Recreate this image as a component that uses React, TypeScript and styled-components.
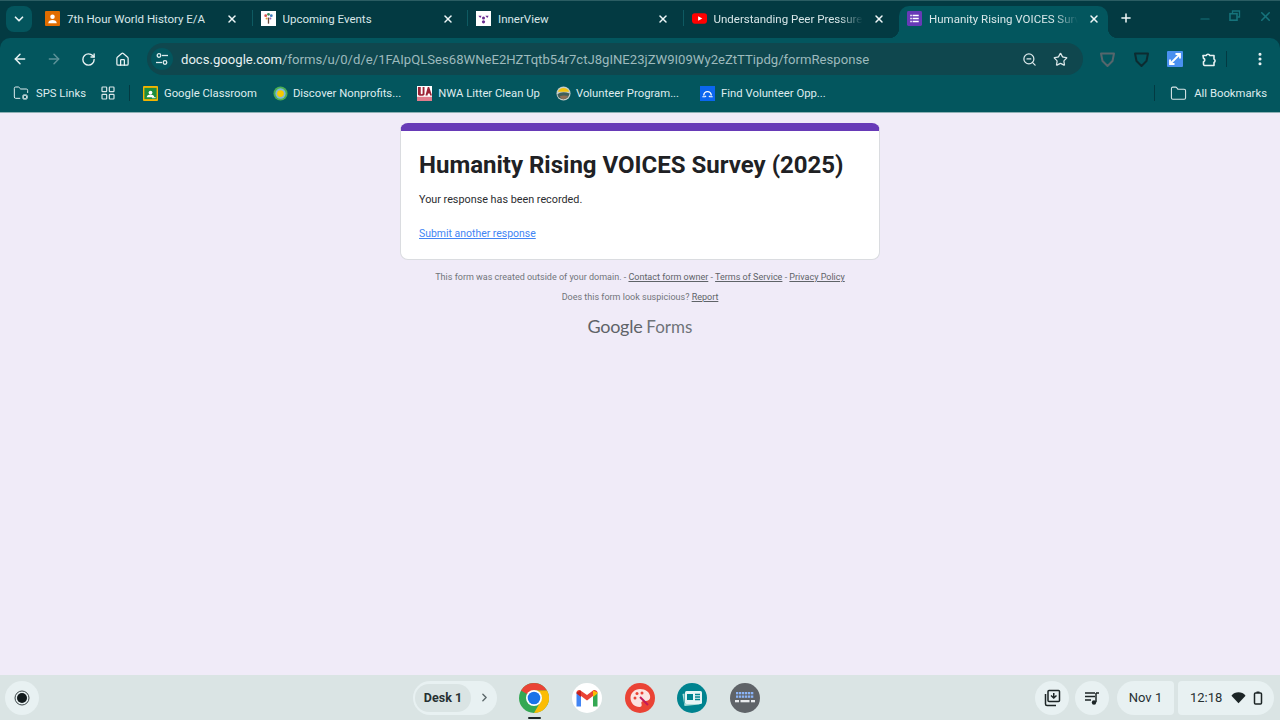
import React from "react";
import styled, { createGlobalStyle } from "styled-components";
import {
  ArrowLeft,
  ArrowRight,
  RotateCw,
  House,
  ChevronDown,
  ChevronRight,
  X,
  Plus,
  Minus,
  ZoomOut,
  Star,
  EllipsisVertical,
  Folder,
  FolderCog,
  LayoutGrid,
} from "lucide-react";

const Global = createGlobalStyle`
  html, body { margin: 0; padding: 0; width: 1280px; height: 720px; overflow: hidden; background: #f0ebf8; }
  #root { width: 1280px; height: 720px; }
  * { box-sizing: border-box; }
`;

const Screen = styled.div`
  width: 1280px;
  height: 720px;
  display: flex;
  flex-direction: column;
  font-family: Roboto, "Liberation Sans", sans-serif;
`;
const Chrome = styled.header`
  background: #033a42;
  border-top: 1px solid #2b5d63;
  flex: none;
`;
const TabStrip = styled.div`
  height: 37px;
  display: flex;
  align-items: flex-start;
  padding-left: 6px;
`;
const TabSearch = styled.button`
  width: 26px;
  height: 26px;
  margin: 5px 5px 0 0;
  flex: none;
  border: 0;
  padding: 0;
  border-radius: 8px;
  background: #04555d;
  color: #e6f2f3;
  display: flex;
  align-items: center;
  justify-content: center;
`;
const Tab = styled.div<{ $active?: boolean }>`
  position: relative;
  width: ${(p) => (p.$active ? "209px" : "215.5px")};
  height: 32px;
  margin-top: 5px;
  flex: none;
  display: flex;
  align-items: center;
  padding: 0 0 7px 8px;
  color: #d8e6e8;
  font-size: 11.5px;
  border-radius: 10px 10px 0 0;
  background: ${(p) => (p.$active ? "#03565e" : "transparent")};
  ${(p) =>
    p.$active &&
    `
    &::before, &::after { content: ""; position: absolute; bottom: 0; width: 10px; height: 10px; }
    &::before { left: -10px; background: radial-gradient(circle at 0 0, transparent 10px, #03565e 10.5px); }
    &::after { right: -10px; background: radial-gradient(circle at 100% 0, transparent 10px, #03565e 10.5px); }
  `}
`;
const TabTitle = styled.span<{ $fade?: boolean }>`
  margin-left: 7px;
  width: 150px;
  flex: none;
  white-space: nowrap;
  overflow: hidden;
  ${(p) =>
    p.$fade &&
    `mask-image: linear-gradient(to right, #000 125px, transparent 149px);`}
`;
const TabClose = styled.span`
  margin-left: 9px;
  display: flex;
  color: #eef6f7;
`;
const TabDivider = styled.i`
  position: absolute;
  right: 0;
  top: 4px;
  width: 1px;
  height: 16px;
  background: #0e5a62;
`;
const NewTab = styled.span`
  margin: 10px 0 0 11px;
  display: flex;
  color: #f2f8f8;
`;
const WindowControls = styled.div`
  margin-left: auto;
  display: flex;
  gap: 14px;
  padding: 7px 7px 0 0;
  color: #16737b;
`;
const WindowButton = styled.span<{ $down?: number }>`
  width: 16px;
  height: 16px;
  display: flex;
  align-items: center;
  justify-content: center;
  margin-top: ${(p) => p.$down ?? 0}px;
`;
const Toolbar = styled.div`
  height: 38px;
  background: #03565e;
  border-radius: 10px 10px 0 0;
  display: flex;
  align-items: center;
  padding: 4px 0 0 3px;
`;
const NavButton = styled.span<{ $dim?: boolean }>`
  width: 34px;
  height: 32px;
  flex: none;
  display: flex;
  align-items: center;
  justify-content: center;
  color: ${(p) => (p.$dim ? "#5d9298" : "#eaf3f4")};
`;
const Omnibox = styled.div`
  width: 936px;
  height: 32px;
  margin-left: 8px;
  flex: none;
  border-radius: 16px;
  background: #0f474e;
  display: flex;
  align-items: center;
  padding: 0 7px 0 4px;
`;
const TuneChip = styled.span`
  width: 22px;
  height: 22px;
  border-radius: 50%;
  background: #03565e;
  color: #dfecee;
  display: flex;
  align-items: center;
  justify-content: center;
  flex: none;
`;
const Url = styled.div`
  margin-left: 8px;
  font-size: 13.12px;
  color: #9dbabd;
  white-space: nowrap;
  flex: 1;
`;
const UrlHost = styled.span`
  color: #e8f1f2;
`;
const OmniIcon = styled.span`
  width: 31px;
  display: flex;
  justify-content: center;
  color: #dce8ea;
`;
const ExtensionRow = styled.div`
  display: flex;
  align-items: center;
  margin-left: 7px;
`;
const ExtensionSlot = styled.span`
  width: 34px;
  display: flex;
  justify-content: center;
  color: #e8f1f2;
`;
const VerticalRule = styled.i<{ $h?: number }>`
  width: 1px;
  height: ${(p) => p.$h ?? 16}px;
  background: #033a42;
  flex: none;
`;
const MenuDots = styled.span`
  margin-left: 17px;
  display: flex;
  color: #eef5f6;
`;
const BookmarkBar = styled.nav`
  height: 37px;
  background: #03565e;
  border-bottom: 1px solid #8fb1b5;
  display: flex;
  align-items: center;
  padding: 0 13px 2px;
  font-size: 11.3px;
  color: #dfecee;
`;
const Bookmark = styled.span<{ $left: number; $gap?: number }>`
  display: flex;
  align-items: center;
  gap: ${(p) => p.$gap ?? 6}px;
  margin-left: ${(p) => p.$left}px;
  white-space: nowrap;
`;
const Spacer = styled.span`
  flex: 1;
`;
const BarIcon = styled.span<{ $left?: number; $right?: number }>`
  display: flex;
  color: #d9e6e8;
  margin-left: ${(p) => p.$left ?? 0}px;
  margin-right: ${(p) => p.$right ?? 0}px;
`;
const Page = styled.main`
  flex: 1;
  min-height: 0;
  background: #f0ebf8;
  display: flex;
  flex-direction: column;
  align-items: center;
  padding-top: 10px;
`;
const Card = styled.section`
  width: 480px;
  height: 137px;
  background: #fff;
  border: 1px solid #dadce0;
  border-top: 8px solid #673ab7;
  border-radius: 8px;
  padding: 20px 18px 0;
`;
const Title = styled.h1`
  margin: 0;
  font-size: 24px;
  line-height: 29px;
  font-weight: 700;
  color: #202124;
  white-space: nowrap;
`;
const Confirmation = styled.p`
  margin: 13px 0 0;
  font-size: 10.8px;
  line-height: 14px;
  color: #2b2c30;
`;
const AnotherLink = styled.a`
  display: block;
  margin-top: 20px;
  font-size: 10.46px;
  line-height: 14px;
  color: #4285f4;
  text-decoration: underline;
`;
const Legal = styled.p<{ $top: number }>`
  margin: ${(p) => p.$top}px 0 0;
  font-size: 9px;
  line-height: 12px;
  color: #70757a;
  white-space: nowrap;
`;
const LegalLink = styled.a`
  color: #5f6368;
  text-decoration: underline;
`;
const Wordmark = styled.div`
  margin-top: 11px;
  display: flex;
  align-items: baseline;
  gap: 4px;
  color: #6f7378;
  font-family: Lato, "Open Sans", sans-serif;
  line-height: 24px;
`;
const WordGoogle = styled.span`
  font-size: 18px;
  letter-spacing: -0.3px;
  color: #5f6368;
`;
const WordForms = styled.span`
  font-size: 17px;
`;
const Shelf = styled.footer`
  height: 45px;
  flex: none;
  background: #dae4e4;
  display: grid;
  grid-template-columns: 1fr auto 1fr;
  align-items: center;
  padding: 0 6px 0 5px;
`;
const ShelfLeft = styled.div`
  display: flex;
  align-items: center;
  justify-content: space-between;
  padding-right: 22px;
`;
const ShelfRight = styled.div`
  display: flex;
  align-items: center;
  justify-content: flex-end;
  gap: 4px;
`;
const RoundButton = styled.span<{ $right?: number }>`
  width: 34px;
  height: 34px;
  border-radius: 50%;
  background: #e8f1f2;
  display: flex;
  align-items: center;
  justify-content: center;
  color: #1c2526;
  margin-right: ${(p) => p.$right ?? 0}px;
`;
const DeskPill = styled.div`
  width: 84px;
  height: 34px;
  border-radius: 17px;
  background: #e8f1f2;
  display: flex;
  align-items: center;
  padding-left: 2px;
  color: #5c686a;
`;
const DeskName = styled.span`
  width: 56px;
  height: 28px;
  border-radius: 14px;
  background: #dae4e4;
  font-size: 12.5px;
  font-weight: 700;
  color: #273032;
  display: flex;
  align-items: center;
  justify-content: center;
  margin-right: 7px;
`;
const Apps = styled.div`
  display: flex;
  gap: 22.75px;
`;
const AppSlot = styled.span`
  position: relative;
  width: 30px;
  height: 30px;
  display: flex;
`;
const RunningDot = styled.i`
  position: absolute;
  left: 9px;
  bottom: -6px;
  width: 13px;
  height: 2px;
  border-radius: 1px;
  background: #1c2526;
`;
const StatusPill = styled.div<{ $w: number; $side: "left" | "right" }>`
  width: ${(p) => p.$w}px;
  height: 34px;
  background: #e8f1f2;
  border-radius: ${(p) => (p.$side === "left" ? "17px 4px 4px 17px" : "4px 17px 17px 4px")};
  display: flex;
  align-items: center;
  justify-content: ${(p) => (p.$side === "left" ? "center" : "flex-start")};
  padding-left: ${(p) => (p.$side === "left" ? 0 : 12)}px;
  font-size: 13px;
  color: #273032;
`;
const StatusIcon = styled.span<{ $left: number }>`
  display: flex;
  margin-left: ${(p) => p.$left}px;
`;

const Svg = ({ s = 16, v = 16, children }: { s?: number; v?: number; children: React.ReactNode }) => (
  <svg width={s} height={s} viewBox={`0 0 ${v} ${v}`} style={{ flex: "none", display: "block" }}>
    {children}
  </svg>
);

const FavHistory = () => (
  <Svg s={15}>
    <rect width="16" height="16" rx="1" fill="#e06c00" />
    <circle cx="8" cy="6" r="2.4" fill="#fff" />
    <path d="M3.5 13c0-2.400 2-3.500 4.500-3.500s4.500 1.100 4.500 3.500z" fill="#fff" />
  </Svg>
);
const FavEvents = () => (
  <Svg s={15}>
    <rect width="16" height="16" fill="#fff" />
    <rect x="7.300" y="7" width="1.400" height="6.500" fill="#6a4a3a" />
    <circle cx="5" cy="5" r="1.500" fill="#d9534f" />
    <circle cx="8" cy="3.500" r="1.500" fill="#3a8f5c" />
    <circle cx="11" cy="5" r="1.500" fill="#3f7fc1" />
    <circle cx="6" cy="8" r="1.100" fill="#e0a030" />
    <circle cx="10" cy="8" r="1.100" fill="#8f5fb5" />
  </Svg>
);
const FavInner = () => (
  <Svg s={15}>
    <rect width="16" height="16" fill="#fff" />
    <path d="M2.500 5h3.500L4.500 7.500zM10 5h3.500L12 7.500z" fill="#6a2c91" />
    <circle cx="8" cy="7.500" r="1.600" fill="#6a2c91" />
    <circle cx="8" cy="11.500" r="1.700" fill="#6a2c91" />
  </Svg>
);
const FavYouTube = () => (
  <Svg s={15}>
    <rect y="2.500" width="16" height="11" rx="3" fill="#f00" />
    <path d="M6.500 5.500v5L11 8z" fill="#fff" />
  </Svg>
);
const FavForms = () => (
  <Svg s={15}>
    <rect width="16" height="16" rx="1.500" fill="#673ab7" />
    <g fill="#fff">
      <rect x="3.500" y="4" width="1.600" height="1.600" />
      <rect x="6" y="4" width="6.500" height="1.600" />
      <rect x="3.500" y="7.200" width="1.600" height="1.600" />
      <rect x="6" y="7.200" width="6.500" height="1.600" />
      <rect x="3.500" y="10.400" width="1.600" height="1.600" />
      <rect x="6" y="10.400" width="6.500" height="1.600" />
    </g>
  </Svg>
);
const FavClassroom = () => (
  <Svg s={15}>
    <rect width="16" height="16" rx="1" fill="#f4b400" />
    <rect x="1.500" y="2" width="13" height="12" fill="#1e8e3e" />
    <circle cx="8" cy="7" r="2" fill="#fff" />
    <path d="M4 12c0-2 1.800-3 4-3s4 1 4 3z" fill="#fff" />
    <rect x="9.500" y="12" width="4" height="1" fill="#fff" />
  </Svg>
);
const FavNonprofit = () => (
  <Svg s={15}>
    <circle cx="8" cy="8" r="7.500" fill="#4caf50" />
    <circle cx="8" cy="8" r="5.500" fill="#7fb8d8" />
    <circle cx="8" cy="8" r="3.600" fill="#f5c800" />
  </Svg>
);
const FavUA = () => (
  <Svg s={15}>
    <rect width="16" height="16" fill="#fff" />
    <rect y="11.500" width="16" height="4.500" fill="#c8102e" opacity=".55" />
    <path d="M1 1h3v7c0 1 2 1 2 0V1h2v8c0 2-7 2-7 0zM9 10l2.500-9h1.500l3 9h-2l-.5-2h-1.800l-.5 2z" fill="#9d2235" />
  </Svg>
);
const FavVolunteer = () => (
  <Svg s={15}>
    <circle cx="8" cy="8" r="7.500" fill="#c6cdc8" />
    <path d="M2 6a6.500 6.500 0 0 1 12 0z" fill="#f2c40f" />
    <path d="M1.500 9c3-3 8-3 13-1-1 4-3 6-6.500 6S2 12 1.500 9z" fill="#3f5f5a" />
    <path d="M4 11c3-1.500 6-1 9-.5-1 2.500-3 3.500-5 3.500s-3-1-4-3z" fill="#8d6e55" />
  </Svg>
);
const FavFind = () => (
  <Svg s={15}>
    <rect width="16" height="16" fill="#0b66f0" />
    <path d="M4 10a4 4 0 0 1 8 0" fill="none" stroke="#fff" strokeWidth="1.500" />
    <path d="M2.500 11.500h3l1-1M13.500 11.500h-3l-1-1" fill="none" stroke="#fff" strokeWidth="1.200" />
  </Svg>
);
const RestoreIcon = () => (
  <Svg s={12} v={12}>
    <path d="M3.500 3V1h7v6h-2" fill="none" stroke="currentColor" strokeWidth="1.300" />
    <rect x="1" y="3.700" width="7" height="6.500" fill="none" stroke="currentColor" strokeWidth="1.600" />
  </Svg>
);
const TuneIcon = () => (
  <Svg s={14} v={14}>
    <g fill="none" stroke="currentColor" strokeWidth="1.300">
      <circle cx="4" cy="3.500" r="1.800" />
      <path d="M7 3.500h6" />
      <circle cx="10" cy="10.500" r="1.800" />
      <path d="M1 10.500h6" />
    </g>
  </Svg>
);
const ShieldIcon = ({ color }: { color: string }) => (
  <Svg s={17} v={17}>
    <path d="M2 2.500h13L13.500 10 8.500 15 3.500 10z" fill="none" stroke={color} strokeWidth="2" strokeLinejoin="round" />
  </Svg>
);
const ResizeExt = () => (
  <Svg s={16}>
    <rect width="16" height="16" rx="1" fill="#4a90f0" />
    <path d="M3 13l10-10M8.500 3H13v4.500M3 8.500V13h4.500" fill="none" stroke="#fff" strokeWidth="1.800" />
  </Svg>
);
const PuzzleIcon = () => (
  <Svg s={17} v={17}>
    <path
      d="M2 4.500h3.200a1.900 1.900 0 0 1 3.600 0H13v3.600a1.900 1.900 0 0 1 0 3.400v3H3.500a1.200 1.200 0 0 1-1-1.200v-2.600a1.700 1.700 0 0 0 0-3.300z"
      fill="none"
      stroke="currentColor"
      strokeWidth="1.600"
      strokeLinejoin="round"
    />
  </Svg>
);
const ChromeLogo = () => (
  <Svg s={30} v={30}>
    <circle cx="15" cy="15" r="15" fill="#34a853" />
    <path d="M15 0a15 15 0 0 1 13 7.500H15a7.500 7.500 0 0 0-6.500 3.750L2 7.500A15 15 0 0 1 15 0z" fill="#ea4335" />
    <path d="M28 7.500A15 15 0 0 1 15 30l6.500-11.250A7.500 7.500 0 0 0 15 7.500z" fill="#fbbc04" />
    <circle cx="15" cy="15" r="8" fill="#fff" />
    <circle cx="15" cy="15" r="6.300" fill="#1a73e8" />
  </Svg>
);
const GmailLogo = () => (
  <Svg s={30} v={30}>
    <circle cx="15" cy="15" r="15" fill="#fff" />
    <path d="M4.500 9.500V23.500h4.500V12.500z" fill="#4285f4" />
    <path d="M25.500 9.500V23.500H21V12.500z" fill="#34a853" />
    <path d="M4.500 9.500c0-2 2.500-3 4-2L15 12l6-4.500c1.500-1 4.500 0 4.500 2l-10.500 8z" fill="#ea4335" />
    <path d="M21 7.500l4.500 2v1l-4.500 3.500z" fill="#fbbc04" />
    <path d="M9 7.500l-4.500 2v1L9 14z" fill="#c5221f" />
  </Svg>
);
const CanvasLogo = () => (
  <Svg s={30} v={30}>
    <circle cx="15" cy="15" r="15" fill="#ea4335" />
    <path d="M15 6c-5.500 0-9.500 4-9.500 9s4 9 9 9c1.500 0 2.200-1 2.200-2 0-1.500-1-2 0-3.200.8-.8 2-.8 3.500-.8 3 0 5-1.500 5-4C25 9 20.500 6 15 6z" fill="#fbe4e2" />
    <circle cx="10" cy="15" r="1.500" fill="#ea4335" />
    <circle cx="12" cy="10.500" r="1.500" fill="#ea4335" />
    <circle cx="17" cy="10" r="1.500" fill="#ea4335" />
    <path d="M15 14l8 8" stroke="#c2185b" strokeWidth="2" />
  </Svg>
);
const ClassLogo = () => (
  <Svg s={30} v={30}>
    <circle cx="15" cy="15" r="15" fill="#00838f" />
    <path d="M5.500 11l2-.5v10h15v1l-15 1.500z" fill="#b2dfdb" />
    <rect x="8" y="8" width="17" height="13" rx="1.500" fill="#e8f5f6" />
    <rect x="10" y="11" width="6" height="6" fill="#00838f" />
    <path d="M18 11.500h5M18 14h5M18 16.500h5" stroke="#00838f" strokeWidth="1.300" />
  </Svg>
);
const KeyboardLogo = () => (
  <Svg s={30} v={30}>
    <circle cx="15" cy="15" r="15" fill="#5f6368" />
    <g fill="#8ab4f8">
      {[6, 9, 12, 15, 18, 21].map((x) => (
        <rect key={x} x={x} y="9" width="2.300" height="2.300" />
      ))}
      {[6, 9, 12, 15, 18, 21].map((x) => (
        <rect key={x} x={x} y="12.500" width="2.300" height="2.300" />
      ))}
    </g>
    <rect x="5" y="17" width="4" height="2.300" fill="#e8eaed" />
    <rect x="10.500" y="17" width="9" height="2.300" fill="#e8eaed" />
    <rect x="21" y="17" width="4" height="2.300" fill="#e8eaed" />
  </Svg>
);
const RecordIcon = () => (
  <Svg s={16}>
    <circle cx="8" cy="8" r="7" fill="none" stroke="#3b4547" strokeWidth="1" />
    <circle cx="8" cy="8" r="5" fill="#111a1c" />
  </Svg>
);
const HoldingIcon = () => (
  <Svg s={20} v={20}>
    <g fill="none" stroke="#1c2526" strokeWidth="1.500">
      <rect x="6" y="2.500" width="11.500" height="11" rx="1" />
      <path d="M3.500 6v10c0 1 .5 1.500 1.500 1.500h9" />
    </g>
    <path d="M11.750 5v4.500M9 7.500l2.750 2.500L14.500 7.500" fill="none" stroke="#1c2526" strokeWidth="1.500" />
  </Svg>
);
const MediaIcon = () => (
  <Svg s={16}>
    <path d="M1 3h10M1 6.500h10M1 10h6" stroke="#1c2526" strokeWidth="1.300" />
    <path d="M12 3v9" stroke="#1c2526" strokeWidth="1.500" />
    <path d="M12 3h3" stroke="#1c2526" strokeWidth="1.500" />
    <circle cx="10" cy="12.500" r="2.200" fill="#1c2526" />
  </Svg>
);
const WifiIcon = () => (
  <Svg s={15}>
    <path d="M0.500 6L8 14l7.500-8C13.500 3.500 11 2.500 8 2.500S2.500 3.500.5 6z" fill="#1c2526" />
  </Svg>
);
const BatteryIcon = () => (
  <Svg s={14} v={14}>
    <rect x="3.500" y="2" width="7" height="11" rx="1" fill="none" stroke="#1c2526" strokeWidth="1.500" />
    <rect x="5.500" y="0.500" width="3" height="1.500" fill="#1c2526" />
  </Svg>
);

type TabData = { title: string; icon: React.ReactNode; fade?: boolean };
const tabs: TabData[] = [
  { title: "7th Hour World History E/A", icon: <FavHistory /> },
  { title: "Upcoming Events", icon: <FavEvents /> },
  { title: "InnerView", icon: <FavInner /> },
  { title: "Understanding Peer Pressure and Teens", icon: <FavYouTube />, fade: true },
  { title: "Humanity Rising VOICES Survey (2025)", icon: <FavForms />, fade: true },
];

type BookmarkData = { title: string; icon: React.ReactNode; left: number; gap?: number };
const bookmarks: BookmarkData[] = [
  { title: "Google Classroom", icon: <FavClassroom />, left: 13 },
  { title: "Discover Nonprofits...", icon: <FavNonprofit />, left: 16, gap: 5 },
  { title: "NWA Litter Clean Up", icon: <FavUA />, left: 16 },
  { title: "Volunteer Program...", icon: <FavVolunteer />, left: 16, gap: 5 },
  { title: "Find Volunteer Opp...", icon: <FavFind />, left: 21 },
];

const DotsOffset = styled(MenuDots)`
  margin-left: 25px;
`;

export default function App() {
  return (
    <Screen>
      <Global />
      <Chrome>
        <TabStrip>
          <TabSearch>
            <ChevronDown size={14} strokeWidth={3} />
          </TabSearch>
          {tabs.map((t, i) => (
            <Tab key={t.title} $active={i === 4}>
              {t.icon}
              <TabTitle $fade={t.fade}>{t.title}</TabTitle>
              <TabClose>
                <X size={12} strokeWidth={3} />
              </TabClose>
              {i < 3 && <TabDivider />}
            </Tab>
          ))}
          <NewTab>
            <Plus size={14} strokeWidth={2.6} />
          </NewTab>
          <WindowControls>
            <WindowButton $down={3}>
              <Minus size={14} />
            </WindowButton>
            <WindowButton>
              <RestoreIcon />
            </WindowButton>
            <WindowButton>
              <X size={15} strokeWidth={2.5} />
            </WindowButton>
          </WindowControls>
        </TabStrip>
        <Toolbar>
          <NavButton>
            <ArrowLeft size={16} strokeWidth={2.2} />
          </NavButton>
          <NavButton $dim>
            <ArrowRight size={16} strokeWidth={2.2} />
          </NavButton>
          <NavButton>
            <RotateCw size={15} strokeWidth={2.2} />
          </NavButton>
          <NavButton>
            <House size={15} strokeWidth={2} />
          </NavButton>
          <Omnibox>
            <TuneChip>
              <TuneIcon />
            </TuneChip>
            <Url>
              <UrlHost>docs.google.com</UrlHost>
              /forms/u/0/d/e/1FAIpQLSes68WNeE2HZTqtb54r7ctJ8gINE23jZW9I09Wy2eZtTTipdg/formResponse
            </Url>
            <OmniIcon>
              <ZoomOut size={15} />
            </OmniIcon>
            <OmniIcon>
              <Star size={15} />
            </OmniIcon>
          </Omnibox>
          <ExtensionRow>
            <ExtensionSlot>
              <ShieldIcon color="#56666c" />
            </ExtensionSlot>
            <ExtensionSlot>
              <ShieldIcon color="#0c2b30" />
            </ExtensionSlot>
            <ExtensionSlot>
              <ResizeExt />
            </ExtensionSlot>
            <ExtensionSlot>
              <PuzzleIcon />
            </ExtensionSlot>
            <VerticalRule />
            <DotsOffset>
              <EllipsisVertical size={16} strokeWidth={2.6} />
            </DotsOffset>
          </ExtensionRow>
        </Toolbar>
        <BookmarkBar>
          <Bookmark $left={0} $gap={7}>
            <FolderCog size={16} strokeWidth={1.5} />
            SPS Links
          </Bookmark>
          <BarIcon $left={14} $right={13}>
            <LayoutGrid size={16} strokeWidth={1.8} />
          </BarIcon>
          <VerticalRule />
          {bookmarks.map((b) => (
            <Bookmark key={b.title} $left={b.left} $gap={b.gap}>
              {b.icon}
              {b.title}
            </Bookmark>
          ))}
          <Spacer />
          <VerticalRule />
          <Bookmark $left={15}>
            <BarIcon $right={1}>
              <Folder size={17} strokeWidth={1.5} />
            </BarIcon>
            All Bookmarks
          </Bookmark>
        </BookmarkBar>
      </Chrome>
      <Page>
        <Card>
          <Title>Humanity Rising VOICES Survey (2025)</Title>
          <Confirmation>Your response has been recorded.</Confirmation>
          <AnotherLink>Submit another response</AnotherLink>
        </Card>
        <Legal $top={11}>
          This form was created outside of your domain. - <LegalLink>Contact form owner</LegalLink> -{" "}
          <LegalLink>Terms of Service</LegalLink> - <LegalLink>Privacy Policy</LegalLink>
        </Legal>
        <Legal $top={8}>
          Does this form look suspicious? <LegalLink>Report</LegalLink>
        </Legal>
        <Wordmark>
          <WordGoogle>Google</WordGoogle>
          <WordForms>Forms</WordForms>
        </Wordmark>
      </Page>
      <Shelf>
        <ShelfLeft>
          <RoundButton>
            <RecordIcon />
          </RoundButton>
          <DeskPill>
            <DeskName>Desk 1</DeskName>
            <ChevronRight size={13} strokeWidth={2.6} />
          </DeskPill>
        </ShelfLeft>
        <Apps>
          <AppSlot>
            <ChromeLogo />
            <RunningDot />
          </AppSlot>
          <AppSlot>
            <GmailLogo />
          </AppSlot>
          <AppSlot>
            <CanvasLogo />
          </AppSlot>
          <AppSlot>
            <ClassLogo />
          </AppSlot>
          <AppSlot>
            <KeyboardLogo />
          </AppSlot>
        </Apps>
        <ShelfRight>
          <RoundButton $right={2}>
            <HoldingIcon />
          </RoundButton>
          <RoundButton $right={4}>
            <MediaIcon />
          </RoundButton>
          <StatusPill $w={57} $side="left">
            Nov 1
          </StatusPill>
          <StatusPill $w={96} $side="right">
            12:18
            <StatusIcon $left={9}>
              <WifiIcon />
            </StatusIcon>
            <StatusIcon $left={5}>
              <BatteryIcon />
            </StatusIcon>
          </StatusPill>
        </ShelfRight>
      </Shelf>
    </Screen>
  );
}
